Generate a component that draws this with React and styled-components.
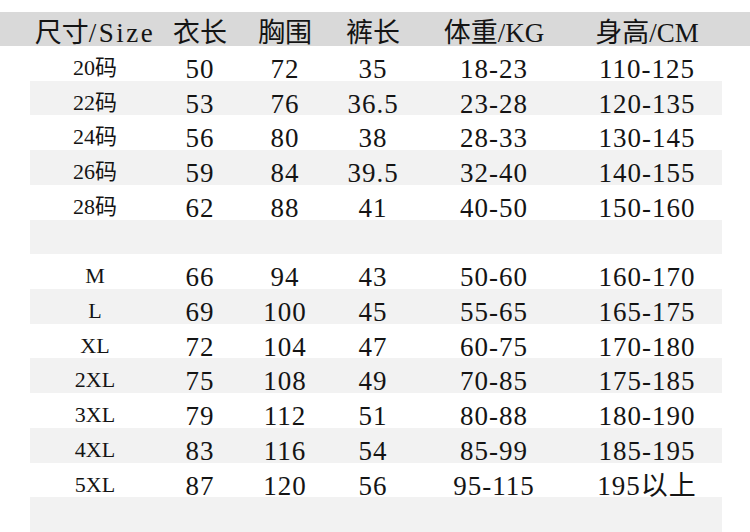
import React from "react";
import styled, { createGlobalStyle } from "styled-components";

const Global = createGlobalStyle`
  html, body { margin: 0; padding: 0; background: #ffffff; }
  body { width: 750px; height: 532px; overflow: hidden; }
`;

const COLS = "130px 80px 90px 86px 156px 150px";

const Page = styled.div`
  padding-top: 12px;
  font-family: "Liberation Serif", "Noto Sans CJK SC", serif;
  color: #141414;
`;

const HeaderRow = styled.div`
  display: grid;
  grid-template-columns: ${COLS};
  height: 34px;
  padding: 0 28px 0 30px;
  background: #d9d9d9;
  align-items: center;
`;

const HeaderCell = styled.div`
  text-align: center;
  font-size: 27px;
  line-height: 34px;
  padding-top: 4px;
  white-space: nowrap;
`;

const Wide = styled.span`
  letter-spacing: 2.5px;
`;

const Row = styled.div`
  display: grid;
  grid-template-columns: ${COLS};
  height: 34.72px;
  margin: 0 28px 0 30px;
  background: ${(p) => (p.$striped ? "#f2f2f2" : "transparent")};
  align-items: center;
`;

const Cell = styled.div`
  text-align: center;
  font-size: ${(p) => (p.$label ? "22px" : "27px")};
  letter-spacing: ${(p) => (p.$label ? "0" : "1px")};
  line-height: 34px;
  padding-top: ${(p) => (p.$label ? "4px" : "6px")};
  white-space: nowrap;
`;

const rows = [
  ["20码", "50", "72", "35", "18-23", "110-125"],
  ["22码", "53", "76", "36.5", "23-28", "120-135"],
  ["24码", "56", "80", "38", "28-33", "130-145"],
  ["26码", "59", "84", "39.5", "32-40", "140-155"],
  ["28码", "62", "88", "41", "40-50", "150-160"],
  null,
  ["M", "66", "94", "43", "50-60", "160-170"],
  ["L", "69", "100", "45", "55-65", "165-175"],
  ["XL", "72", "104", "47", "60-75", "170-180"],
  ["2XL", "75", "108", "49", "70-85", "175-185"],
  ["3XL", "79", "112", "51", "80-88", "180-190"],
  ["4XL", "83", "116", "54", "85-99", "185-195"],
  ["5XL", "87", "120", "56", "95-115", "195以上"],
  null,
];

export default function App() {
  return (
    <>
      <Global />
      <Page>
        <HeaderRow>
          <HeaderCell>
            尺寸<Wide>/Size</Wide>
          </HeaderCell>
          <HeaderCell>衣长</HeaderCell>
          <HeaderCell>胸围</HeaderCell>
          <HeaderCell>裤长</HeaderCell>
          <HeaderCell>体重/KG</HeaderCell>
          <HeaderCell>身高/CM</HeaderCell>
        </HeaderRow>
        {rows.map((r, i) => (
          <Row key={i} $striped={i % 2 === 1}>
            {r &&
              r.map((v, j) => (
                <Cell key={j} $label={j === 0}>
                  {v}
                </Cell>
              ))}
          </Row>
        ))}
      </Page>
    </>
  );
}
